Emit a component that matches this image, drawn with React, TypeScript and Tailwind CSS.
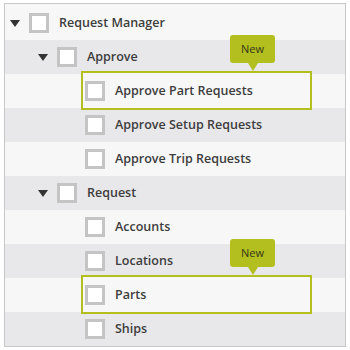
import type { ReactNode } from 'react';

type Node = {
  label: string;
  level: number;
  parent?: boolean;
  isNew?: boolean;
};

const NODES: Node[] = [
  { label: 'Request Manager', level: 0, parent: true },
  { label: 'Approve', level: 1, parent: true },
  { label: 'Approve Part Requests', level: 2, isNew: true },
  { label: 'Approve Setup Requests', level: 2 },
  { label: 'Approve Trip Requests', level: 2 },
  { label: 'Request', level: 1, parent: true },
  { label: 'Accounts', level: 2 },
  { label: 'Locations', level: 2 },
  { label: 'Parts', level: 2, isNew: true },
  { label: 'Ships', level: 2 },
];

const PAD = ['pl-[5px]', 'pl-[33px]', 'pl-[61px]'];

function NewBadge() {
  return (
    <div className="absolute left-[147px] top-[-38px] flex flex-col items-center">
      <div className="flex h-[28px] w-[45px] items-center justify-center rounded-[3px] bg-[#b3bf1f] text-[11px] text-[#33361a]">
        New
      </div>
      <div className="h-0 w-0 border-x-[5px] border-t-[8px] border-x-transparent border-t-[#b3bf1f]" />
    </div>
  );
}

function Row({ node, striped, first }: { node: Node; striped: boolean; first: boolean }): ReactNode {
  return (
    <div
      className={`relative flex items-center ${first ? 'h-[36px] pt-[2px]' : 'h-[34px]'} ${PAD[node.level]} ${
        striped ? 'bg-[#e8e8ea]' : 'bg-[#f7f7f7]'
      }`}
    >
      {node.isNew && (
        <div className="absolute bottom-[-2px] left-[76px] top-[-3px] z-10 w-[231px] border-2 border-[#b3bf1f] bg-[#f7f7f7]">
          <NewBadge />
        </div>
      )}
      <span className="relative z-20 flex w-[19px] shrink-0 items-center">
        {node.parent && (
          <span className="h-0 w-0 border-x-[5px] border-t-[7px] border-x-transparent border-t-[#333]" />
        )}
      </span>
      <span className="relative z-20 h-[20px] w-[20px] shrink-0 border-[3px] border-[#c4c4c4] bg-white" />
      <span className="relative z-20 ml-[10px] text-[12.5px] font-semibold text-[#3d3d3d]">{node.label}</span>
    </div>
  );
}

export default function App() {
  return (
    <div
      className="h-[350px] w-[350px] bg-white pl-[4px] pt-[3px]"
      style={{ fontFamily: '"Open Sans", "Liberation Sans", sans-serif' }}
    >
      <div className="w-[342px] border border-[#c8c8c8] bg-[#f7f7f7]">
        {NODES.map((n, i) => (
          <Row key={n.label} node={n} striped={i % 2 === 1} first={i === 0} />
        ))}
      </div>
    </div>
  );
}
